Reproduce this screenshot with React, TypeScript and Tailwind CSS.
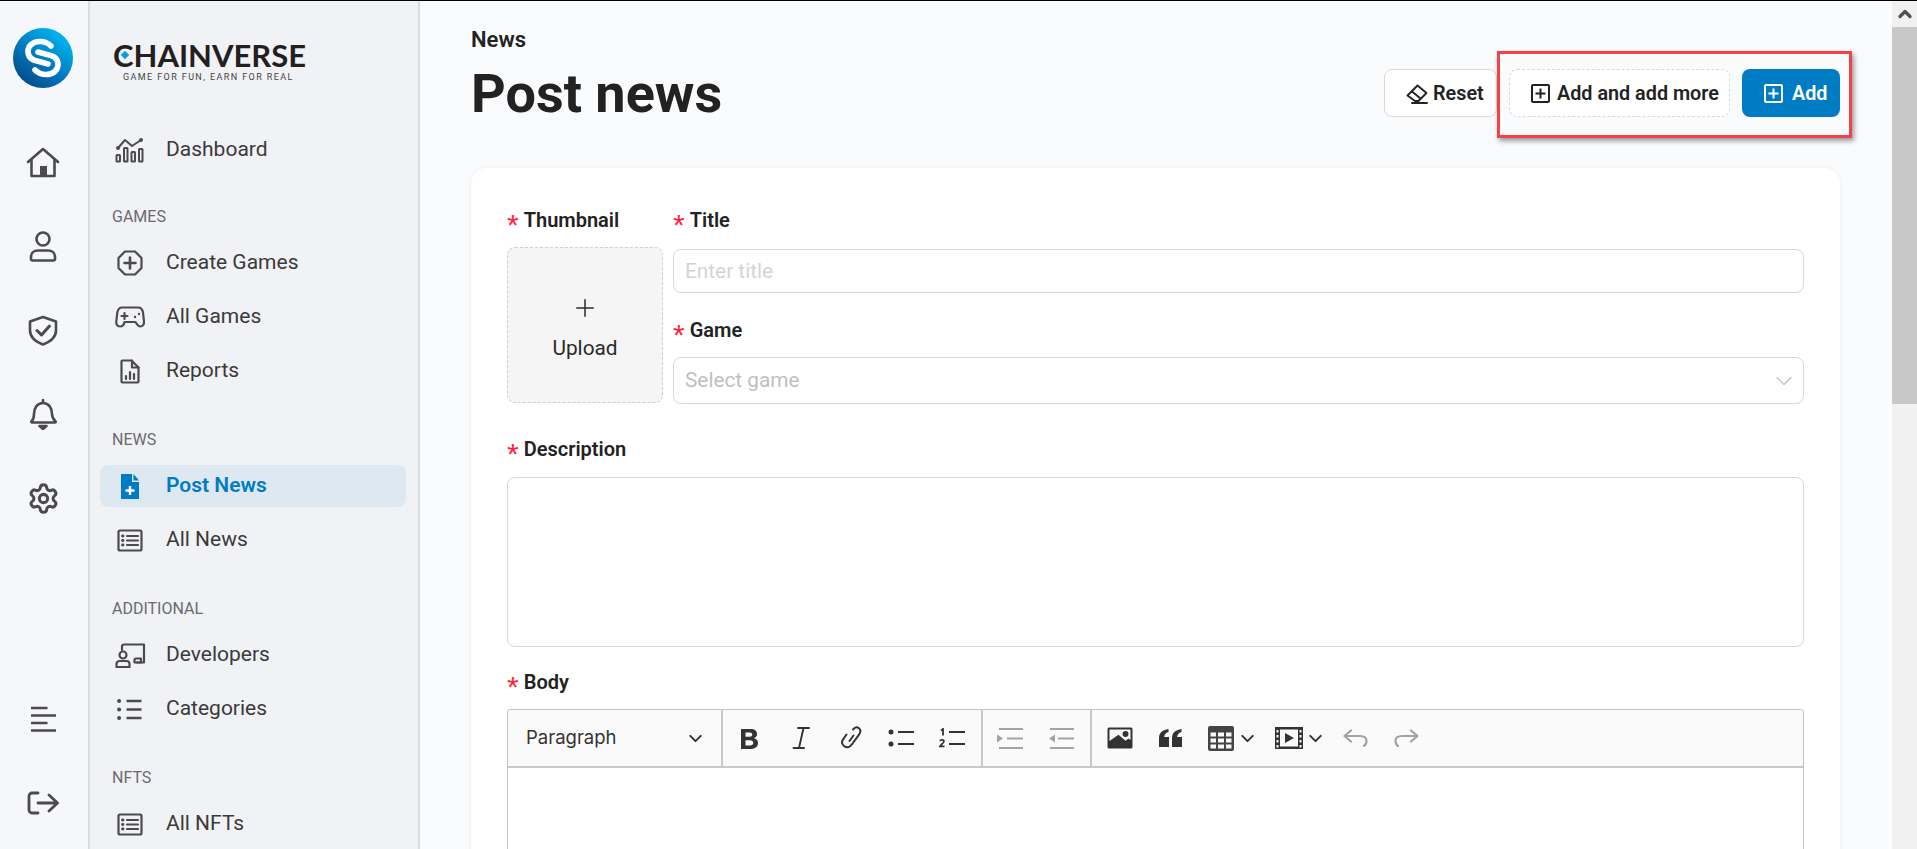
import React from "react";
import { Settings, ChevronDown, ChevronUp, Plus } from "lucide-react";

type P = { className?: string };
const S = ({ w, h, children, className, sw = 2 }: { w: number; h: number; children: React.ReactNode; className?: string; sw?: number }) => (
  <svg width={w} height={h} viewBox={`0 0 ${w} ${h}`} fill="none" stroke="currentColor" strokeWidth={sw} strokeLinecap="round" strokeLinejoin="round" className={className}>
    {children}
  </svg>
);

const LogoMark = () => (
  <svg width="60" height="60" viewBox="0 0 60 60">
    <defs>
      <linearGradient id="lg" x1="0.85" y1="0.1" x2="0.2" y2="0.95">
        <stop offset="0" stopColor="#00b9f1" />
        <stop offset="0.55" stopColor="#0079bd" />
        <stop offset="1" stopColor="#004a85" />
      </linearGradient>
    </defs>
    <circle cx="30" cy="30" r="30" fill="url(#lg)" />
    <g fill="none" stroke="#fff" strokeWidth="5.6" strokeLinecap="round">
      <path d="M38 18C35 15 31 13.500 27 13.500 20 13.500 15 17.500 15 23.500 15 29.500 20 32.500 26 33.500L35 36" />
      <path d="M22 42C25 45 29 46.500 33 46.500 40 46.500 45 42.500 45 36.500 45 30.500 40 27.500 34 26.500L25 24" />
    </g>
  </svg>
);

const Home = () => (
  <S w={34} h={31} sw={2.6}>
    <path d="M2 15 17 2l15 13" />
    <path d="M5.500 13v16h23V13" />
    <rect x="14" y="19" width="7" height="10" fill="currentColor" stroke="none" />
  </S>
);
const User = () => (
  <S w={28} h={31} sw={2.6}>
    <circle cx="14" cy="8" r="6.500" />
    <path d="M2 26c0-4 3-6.500 7-6.500h10c4 0 7 2.500 7 6.500v2a1.500 1.500 0 0 1-1.500 1.500h-21A1.500 1.500 0 0 1 2 28z" />
  </S>
);
const Shield = () => (
  <S w={30} h={31} sw={2.6}>
    <path d="M15 2 28 6.500v9c0 6.500-5 11-13 14C7 26.500 2 22 2 15.500v-9z" />
    <path d="m9 15.500 4.500 4.500L21.500 11" strokeWidth="3" />
  </S>
);
const Bell = () => (
  <S w={28} h={32} sw={2.6}>
    <path d="M14 2v2.500M5 16c0-6.500 3.500-11 9-11s9 4.500 9 11c0 3.500 2 6 3.500 7.500.4.400 0 1-.5 1H3c-.5 0-.9-.6-.5-1C4 22 5 19.500 5 16z" />
    <path d="M10.500 28h7l-3.500 3z" fill="currentColor" />
  </S>
);
const Bars = () => (
  <S w={28} h={26} sw={2.6}>
    <path d="M2 2h16.500M2 9.500h25M2 17h16.500M2 24.500h25" strokeLinecap="butt" />
  </S>
);
const Logout = () => (
  <S w={32} h={24} sw={2.8}>
    <path d="M11 2H5a3 3 0 0 0-3 3v14a3 3 0 0 0 3 3h6" />
    <path d="M11 12h19M22 4l8.500 8-8.500 8" />
  </S>
);

const Dash = () => (
  <S w={30} h={26} sw={2}>
    <path d="M3 11 10 3l7 6 9-6" />
    <circle cx="3" cy="11" r="1" fill="currentColor" />
    <circle cx="26" cy="3" r="1" fill="currentColor" />
    <rect x="1.500" y="18" width="3.500" height="6.500" rx=".6" />
    <rect x="9" y="11" width="3.500" height="13.500" rx=".6" />
    <rect x="16.500" y="15" width="3.500" height="9.500" rx=".6" />
    <rect x="24" y="12" width="3.500" height="12.500" rx=".6" />
  </S>
);
const PlusOct = () => (
  <S w={26} h={26} sw={2.2}>
    <path d="M8 1.500h10L24.500 8v10L18 24.500H8L1.500 18V8z" />
    <path d="M13 7.500v11M7.500 13h11" strokeWidth="2.600" />
  </S>
);
const Pad = () => (
  <S w={30} h={22} sw={2.2}>
    <path d="M7 1.500h16c3 0 4.500 2 5 5l1 9c.3 3-1.500 5-3.500 5-2.500 0-3.500-2-5-4.500h-11C9 18.500 8 20.500 5 20.500c-2.500 0-4-2-3.700-5l1-9C3 3.500 4 1.500 7 1.500z" />
    <path d="M6.500 10h6M9.500 7v6" />
    <circle cx="20" cy="11" r="1.200" fill="currentColor" stroke="none" />
    <circle cx="24" cy="8" r="1.200" fill="currentColor" stroke="none" />
  </S>
);
const Report = () => (
  <S w={20} h={25} sw={2.2}>
    <path d="M11.500 1.500H2.500a1 1 0 0 0-1 1v20a1 1 0 0 0 1 1h15a1 1 0 0 0 1-1V8.500z" />
    <path d="M12 1.500v7h6.500" />
    <path d="M6 20v-3M10 20v-7M14 20v-5" />
  </S>
);
const FilePlus = () => (
  <svg width="20" height="25" viewBox="0 0 20 25">
    <path d="M1 0h11v8h7v17H1z" fill="#007cc5" />
    <path d="M13.500 0 19 6.500h-5.500z" fill="#007cc5" />
    <path d="M10 12v9M5.500 16.500h9" stroke="#fff" strokeWidth="2.400" />
  </svg>
);
const ListBox = () => (
  <S w={26} h={23} sw={2.2}>
    <rect x="1.500" y="1.500" width="23" height="20" rx="1.500" />
    <path d="M10 7h11M10 11.500h11M10 16h11" />
    <path d="M5.500 7h.5M5.500 11.500h.5M5.500 16h.5" strokeWidth="2.800" />
  </S>
);
const Dev = () => (
  <S w={31} h={25} sw={2.2}>
    <path d="M7 7V3.500a2 2 0 0 1 2-2h20v18h-7" />
    <circle cx="8" cy="12" r="3.500" />
    <path d="M1.500 23v-2a3 3 0 0 1 3-3h7a3 3 0 0 1 3 3v3h-13z" />
    <path d="M19.500 19v-2a1.500 1.500 0 0 1 1.500-1.500h5v4h-6.500z" />
  </S>
);
const Cats = () => (
  <S w={26} h={21} sw={2.400}>
    <path d="M9.500 2h15M9.500 10.500h15M9.500 19h15" strokeLinecap="butt" />
    <path d="M2 2h.2M2 10.500h.2M2 19h.2" strokeWidth="3.800" />
  </S>
);
const Eraser = () => (
  <S w={22} h={20} sw={1.900}>
    <path d="m11.500 1.500 9 7.500-8 8h-3.500L1.500 11.500z" />
    <path d="m6 7.500 8.500 7" />
    <path d="M6 19h15" />
  </S>
);
const PlusBox = ({ className }: P) => (
  <S w={19} h={19} sw={2} className={className}>
    <rect x="1" y="1" width="17" height="17" rx="1" />
    <path d="M9.500 4.500v10M4.500 9.500h10" strokeLinecap="butt" />
  </S>
);

const Bold = () => (
  <svg width="20" height="21" viewBox="0 0 20 21" fill="#333">
    <path d="M1 1h9.500c4 0 6.500 1.800 6.500 5 0 2-1 3.500-3 4.200 2.500.6 4 2.300 4 4.800 0 3.700-3 6-7.500 6H1zm4.500 3.500v4.300h4c1.800 0 2.800-.8 2.800-2.200s-1-2.100-2.800-2.100zm0 7.700v5.300h4.500c2 0 3.300-1 3.300-2.700s-1.300-2.600-3.300-2.600z" />
  </svg>
);
const Ital = () => (
  <svg width="18" height="22" viewBox="0 0 18 22" fill="none" stroke="#333" strokeWidth="1.900" strokeLinecap="round">
    <path d="M6 1h11M1.500 21H12M11.500 1 7 21" />
  </svg>
);
const LinkI = () => (
  <svg width="22" height="24" viewBox="0 0 22 24" fill="none" stroke="#333" strokeWidth="2" strokeLinecap="round">
    <path d="M13 3.500c2-2.300 4.500-2.500 6-1.200s1.800 3.800.2 6l-7 9.700c-2 2.800-5 4-7.800 2.300-2.700-1.600-3-4.700-1.300-7l3.400-4.800" />
    <path d="M9.500 15l4-5.500" />
  </svg>
);
const Bullets = () => (
  <svg width="26" height="18" viewBox="0 0 26 18" stroke="#333" strokeWidth="2">
    <circle cx="3" cy="3" r="2.500" fill="#333" stroke="none" />
    <circle cx="3" cy="15" r="2.500" fill="#333" stroke="none" />
    <path d="M10 3h16M10 15h16" />
  </svg>
);
const Numbers = () => (
  <svg width="26" height="20" viewBox="0 0 26 20" stroke="#333" strokeWidth="2">
    <path d="M10 4h16M10 16h16" />
    <path d="M2 2.500 4 1v6.500" fill="none" strokeWidth="1.800" />
    <path d="M1 13c.5-1.500 4-1.500 4 .3 0 1.500-2.500 2.500-4 5h4.500" fill="none" strokeWidth="1.700" />
  </svg>
);
const Indent = ({ out }: { out?: boolean }) => (
  <svg width="26" height="21" viewBox="0 0 26 21" stroke="#a3a3a3" strokeWidth="2" fill="#a3a3a3">
    <path d="M2 1h24M2 20h24M10 10.500h16" />
    {out ? <path d="M7 6.500v8L1 10.500z" stroke="none" /> : <path d="M0 6.500v8l6-4z" stroke="none" />}
  </svg>
);
const Image = () => (
  <svg width="26" height="22" viewBox="0 0 26 22">
    <rect x="0.500" y="0.500" width="25" height="21" rx="1.500" fill="#333" />
    <path d="M2.500 14V2.500h21V13l-2-1.500-3 2.200-7-6z" fill="#fafafa" />
    <circle cx="18.500" cy="7" r="3" fill="#333" />
  </svg>
);
const Quote = () => (
  <svg width="23" height="18" viewBox="0 0 23 18" fill="#333">
    <path d="M0 18V9.500C0 4 3 1 9.500 0v3C6.500 4 5.500 5.500 5.200 8H10v10zM13 18V9.500C13 4 16 1 22.500 0v3c-3 1-4 2.500-4.300 5H23v10z" />
  </svg>
);
const TableI = () => (
  <svg width="26" height="25" viewBox="0 0 26 25">
    <rect x="0" y="0" width="26" height="25" rx="2" fill="#444" />
    <g fill="#fafafa">
      <rect x="2.500" y="6.500" width="5.500" height="4" />
      <rect x="10" y="6.500" width="6" height="4" />
      <rect x="18" y="6.500" width="5.500" height="4" />
      <rect x="2.500" y="12.500" width="5.500" height="4" />
      <rect x="10" y="12.500" width="6" height="4" />
      <rect x="18" y="12.500" width="5.500" height="4" />
      <rect x="2.500" y="18.500" width="5.500" height="4" />
      <rect x="10" y="18.500" width="6" height="4" />
      <rect x="18" y="18.500" width="5.500" height="4" />
    </g>
  </svg>
);
const Media = () => (
  <svg width="28" height="22" viewBox="0 0 28 22">
    <rect width="28" height="22" fill="#333" />
    <rect x="5" y="2.500" width="18" height="17" fill="#fafafa" />
    <path d="M10 6v10l9-5z" fill="#333" />
    <g fill="#fafafa">
      <rect x="1.500" y="3" width="2" height="2.500" />
      <rect x="1.500" y="8" width="2" height="2.500" />
      <rect x="1.500" y="13" width="2" height="2.500" />
      <rect x="1.500" y="18" width="2" height="2.500" />
      <rect x="24.500" y="3" width="2" height="2.500" />
      <rect x="24.500" y="8" width="2" height="2.500" />
      <rect x="24.500" y="13" width="2" height="2.500" />
      <rect x="24.500" y="18" width="2" height="2.500" />
    </g>
  </svg>
);
const Arrow = ({ flip }: { flip?: boolean }) => (
  <svg width="25" height="18" viewBox="0 0 25 18" fill="none" stroke="#a3a3a3" strokeWidth="2.200" strokeLinecap="round" strokeLinejoin="round" className={flip ? "-scale-x-100" : ""}>
    <path d="M8 1.500 1.500 7 8 12.500M1.500 7H17c4 0 6.500 2 6.500 5 0 2-1 4-2.500 5" />
  </svg>
);
const Chev = () => <ChevronDown size={21} strokeWidth={2.3} className="text-[#333]" />;

const Item = ({ icon, label, active }: { icon: React.ReactNode; label: string; active?: boolean }) => (
  <div className={`mb-3 flex h-[42px] items-center rounded-lg ${active ? "bg-[#dee8f1] font-semibold text-[#007cc5]" : "text-[#3a3a3a]"}`}>
    <div className={`flex w-[60px] justify-center ${active ? "" : "text-[#4b4b4b]"}`}>{icon}</div>
    <span className="ml-[6px] text-[21px]">{label}</span>
  </div>
);
const Section = ({ children }: { children: string }) => (
  <div className="mt-[38px] mb-[15px] h-5 pl-[12px] text-[16px] leading-5 text-[#6b6b6b]">{children}</div>
);
const Rail = ({ children }: { children: React.ReactNode }) => (
  <div className="flex h-[84px] items-center justify-center pr-[2px] text-[#4b4b4b]">{children}</div>
);
const Label = ({ children }: { children: string }) => (
  <div className="flex h-6 items-center text-[20px] font-semibold leading-6 text-[#222]">
    <span className="relative top-[5px] mr-[5px] font-['Liberation_Sans',sans-serif] text-[30px] font-normal leading-none text-[#ff1f3d]">*</span>
    {children}
  </div>
);
const TB = ({ children, w = "w-[51px]" }: { children: React.ReactNode; w?: string }) => (
  <div className={`flex h-full ${w} shrink-0 items-center justify-center`}>{children}</div>
);

export default function App() {
  return (
    <div className="relative flex h-[849px] w-[1917px] overflow-hidden border-t border-black bg-[#fafbfd] font-['Roboto',sans-serif]">
      <aside className="flex w-[90px] shrink-0 flex-col border-r-2 border-[#dcdde1] bg-[#f6f7fb]">
        <div className="ml-[13px] mt-[27px] mb-[32px]"><LogoMark /></div>
        <Rail><Home /></Rail>
        <Rail><User /></Rail>
        <Rail><Shield /></Rail>
        <Rail><Bell /></Rail>
        <Rail><Settings size={33} strokeWidth={2.2} /></Rail>
        <div className="mt-auto pb-[4px]">
          <Rail><Bars /></Rail>
          <Rail><Logout /></Rail>
        </div>
      </aside>

      <nav className="w-[330px] shrink-0 overflow-hidden border-r-2 border-[#dcdde1] bg-[#f1f2f6] pl-[10px] pr-3">
        <div className="relative ml-[13px] mt-[39px] h-[42px] w-[200px]">
          <div className="font-['Lato',sans-serif] text-[31px] font-bold leading-[30px] text-[#231f20]">CHAINVERSE</div>
          <span className="absolute left-[9px] top-[12px] h-[6px] w-[6px] rotate-45 bg-[#0a9ddb]" />
          <div className="pl-[10px] text-[9px] font-normal leading-[14px] tracking-[1.4px] text-[#444]">GAME FOR FUN, EARN FOR REAL</div>
        </div>
        <div className="mt-[47px] -mb-[2px]">
          <Item icon={<Dash />} label="Dashboard" />
        </div>
        <Section>GAMES</Section>
        <Item icon={<PlusOct />} label="Create Games" />
        <Item icon={<Pad />} label="All Games" />
        <Item icon={<Report />} label="Reports" />
        <Section>NEWS</Section>
        <Item icon={<FilePlus />} label="Post News" active />
        <Item icon={<ListBox />} label="All News" />
        <Section>ADDITIONAL</Section>
        <Item icon={<Dev />} label="Developers" />
        <Item icon={<Cats />} label="Categories" />
        <Section>NFTS</Section>
        <Item icon={<ListBox />} label="All NFTs" />
      </nav>

      <main className="min-w-0 flex-1 overflow-hidden pl-[51px] pr-[52px] text-[#222]">
        <div className="flex h-[167px] items-start justify-between">
          <div>
            <div className="mt-[27px] text-[22px] font-semibold leading-6">News</div>
            <h1 className="mt-[10px] text-[54px] font-bold leading-[64px]">Post news</h1>
          </div>
          <div className="mt-[68px] flex gap-3">
            <button className="flex h-12 w-[113px] items-center justify-start gap-[5px] rounded-lg border border-[#d9d9d9] bg-white pl-[21px] pt-px text-[19.8px] font-semibold"><Eraser />Reset</button>
            <button className="flex h-12 w-[221px] items-center justify-start gap-[7px] rounded-lg border border-dashed border-[#d9d9d9] bg-white pl-[21px] pt-px text-[19.8px] font-semibold"><PlusBox />Add and add more</button>
            <button className="flex h-12 w-[98px] items-center justify-start gap-[9px] rounded-lg bg-[#007cc5] pl-[22px] pt-px text-[19.8px] font-semibold text-white"><PlusBox />Add</button>
          </div>
        </div>

        <section className="rounded-2xl bg-white px-9 pt-10 shadow-[0_0_4px_rgba(0,0,0,0.06)]">
          <div className="flex gap-[10px]">
            <div className="w-[156px] shrink-0">
              <Label>Thumbnail</Label>
              <div className="mt-[15px] flex h-[156px] flex-col items-center justify-center rounded-lg border border-dashed border-[#d0d0d0] bg-[#f5f5f5] pt-[3px] text-[#2a2a2a]">
                <Plus size={28} strokeWidth={1.300} />
                <div className="mt-[14px] text-[20.8px] leading-6">Upload</div>
              </div>
            </div>
            <div className="min-w-0 flex-1">
              <Label>Title</Label>
              <div className="mt-[17px] flex h-[44px] items-center rounded-lg border border-[#d9d9d9] pl-[11px] pt-[2px] text-[20.8px] text-[#d4d4d4]">Enter title</div>
              <div className="mt-[25px]"><Label>Game</Label></div>
              <div className="mt-[15px] flex h-[47px] items-center justify-between rounded-lg border border-[#d9d9d9] pl-[11px] pr-[5px] text-[20.8px] text-[#bfbfbf]">
                Select game
                <ChevronDown size={28} strokeWidth={1} className="text-[#bfbfbf]" />
              </div>
            </div>
          </div>

          <div className="mt-[33px]"><Label>Description</Label></div>
          <div className="mt-4 h-[170px] rounded-lg border border-[#d9d9d9]" />

          <div className="mt-[23px]"><Label>Body</Label></div>
          <div className="mt-[15px] overflow-hidden rounded-t-[3px] border border-[#c4c4c4]">
            <div className="flex h-[58px] items-stretch border-b-2 border-[#c8c8c8] bg-[#fafafa] text-[#333]">
              <div className="flex w-[213px] items-center justify-between pl-[18px] pr-[15px] font-['Inter',sans-serif] text-[18.5px]">
                Paragraph
                <Chev />
              </div>
              <div className="flex w-[262px] border-x-2 border-[#c8c8c8] pl-[1px]">
                <TB><Bold /></TB><TB><Ital /></TB><TB w="w-[49px]"><LinkI /></TB><TB><Bullets /></TB><TB><Numbers /></TB>
              </div>
              <div className="flex w-[109px] border-r-2 border-[#c8c8c8] pl-[1px]">
                <TB><Indent /></TB><TB><Indent out /></TB>
              </div>
              <div className="flex pl-[2px]">
                <TB><Image /></TB>
                <TB><Quote /></TB>
                <TB w="w-[74px]"><TableI /><span className="ml-[3px]"><Chev /></span></TB>
                <TB w="w-[60px]"><Media /><span className="ml-[2px]"><Chev /></span></TB>
                <TB><Arrow /></TB>
                <TB><Arrow flip /></TB>
              </div>
            </div>
            <div className="h-[300px] bg-white" />
          </div>
        </section>
      </main>

      <div className="flex w-[25px] shrink-0 flex-col bg-[#f1f1f1]">
        <div className="flex h-[26px] items-center justify-center text-[#505050]"><ChevronUp size={20} strokeWidth={4} /></div>
        <div className="h-[377px] bg-[#c8c8c8]" />
      </div>

      <div className="absolute left-[1497px] top-[50px] h-[87px] w-[355px] border-[3px] border-[#f4424a] shadow-[2px_3px_5px_rgba(0,0,0,0.4)]" />
    </div>
  );
}
